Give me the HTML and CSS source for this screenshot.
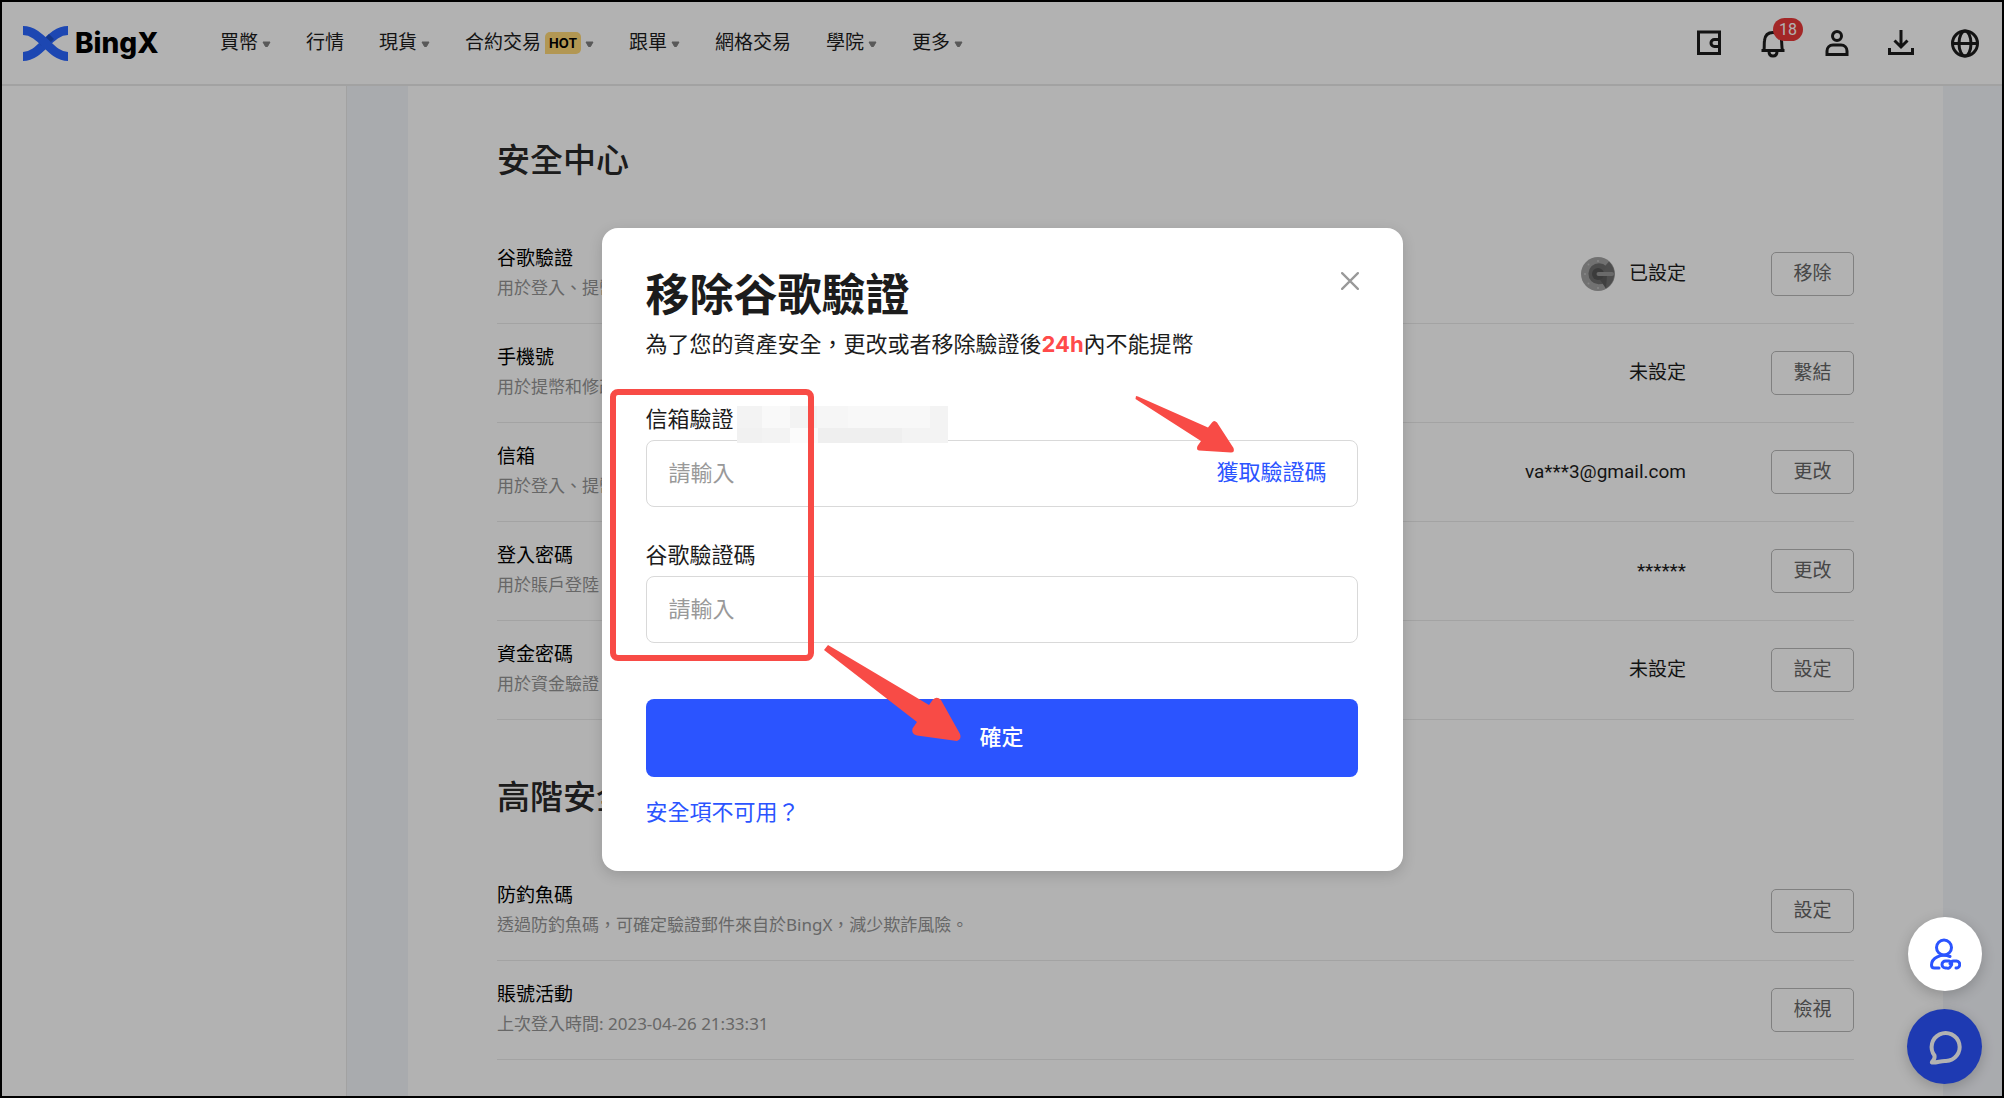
FILE: index.html
```html
<!DOCTYPE html>
<html lang="zh-Hant">
<head>
<meta charset="utf-8">
<meta name="viewport" content="width=device-width, initial-scale=1">
<title>BingX 安全中心</title>
<link rel="stylesheet" href="styles.css">
</head>
<body>
<div class="frame">
  <header class="header">
    <a class="logo" href="#" aria-label="BingX">
      <svg class="logo-mark" viewBox="0 0 45 35" aria-hidden="true">
        <path d="M0 30.500C18 30.500 26 4.500 45 4.500" fill="none" stroke="#2a66ff" stroke-width="9"/>
        <path d="M17 19L26 8L31 13L24 20Z" fill="#1f4fc4"/>
        <path d="M0 4.500C19 4.500 27 30.500 45 30.500" fill="none" stroke="#2a66ff" stroke-width="9"/>
      </svg>
      <span class="logo-text">BingX</span>
    </a>
    <nav class="nav">
      <a href="#">買幣<svg class="caret" viewBox="0 0 9 7"><path d="M1 1H8L5.500 5.500H3.500Z"/></svg></a>
      <a href="#">行情</a>
      <a href="#">現貨<svg class="caret" viewBox="0 0 9 7"><path d="M1 1H8L5.500 5.500H3.500Z"/></svg></a>
      <a href="#">合約交易<span class="hot">HOT</span><svg class="caret" viewBox="0 0 9 7"><path d="M1 1H8L5.500 5.500H3.500Z"/></svg></a>
      <a href="#">跟單<svg class="caret" viewBox="0 0 9 7"><path d="M1 1H8L5.500 5.500H3.500Z"/></svg></a>
      <a href="#">網格交易</a>
      <a href="#">學院<svg class="caret" viewBox="0 0 9 7"><path d="M1 1H8L5.500 5.500H3.500Z"/></svg></a>
      <a href="#">更多<svg class="caret" viewBox="0 0 9 7"><path d="M1 1H8L5.500 5.500H3.500Z"/></svg></a>
    </nav>
    <div class="tools">
      <button class="tool" type="button" aria-label="資產">
        <svg viewBox="0 0 32 32"><path d="M5.500 5H26.500V26.500H5.500ZM26.500 12.500H21.500A3.500 3.500 0 0 0 21.500 19.500H26.500"/></svg>
      </button>
      <button class="tool" type="button" aria-label="通知">
        <svg viewBox="0 0 32 32"><path d="M4.500 23.500H27.500M7 23C7.500 20 7 17 7.500 13.500C8 8.500 11 5.500 16 5.500S24 8.500 24.500 13.500C25 17 24.500 20 25.500 23M12 24.500C12 27.500 13.500 29 16 29S20 27.500 20 24.500"/></svg>
        <span class="count">18</span>
      </button>
      <button class="tool" type="button" aria-label="帳戶">
        <svg viewBox="0 0 32 32"><circle cx="16" cy="9" r="4.500"/><path d="M6 27.500V24C6 20.500 8.500 18 12 18H20C23.500 18 26 20.500 26 24V27.500Z"/></svg>
      </button>
      <button class="tool" type="button" aria-label="下載">
        <svg viewBox="0 0 32 32"><path d="M16 3V20M9.500 13.500L16 20L22.500 13.500M4.500 21V26.500H27.500V21"/></svg>
      </button>
      <button class="tool" type="button" aria-label="語言">
        <svg viewBox="0 0 32 32"><circle cx="16" cy="16.500" r="12.500"/><ellipse cx="16" cy="16.500" rx="6" ry="12.500"/><path d="M3.500 16.500H28.500"/></svg>
      </button>
    </div>
  </header>

  <div class="layout">
    <aside class="sidebar"></aside>
    <main class="main">
      <section class="section">
        <h2>安全中心</h2>
        <div class="row">
          <div class="info"><h3>谷歌驗證</h3><p>用於登入、提幣</p></div>
          <div class="value">
            <svg class="auth" viewBox="0 0 34 34" aria-hidden="true">
              <circle cx="17" cy="17" r="17" fill="#a3a3a3"/>
              <path d="M17 17L28 4.500A17 17 0 0 1 25 31.500Z" fill="#707070"/>
              <path d="M25.500 9.500A10.500 10.500 0 1 0 25 24.500L21 17Z" fill="#6e6e6e"/>
              <path d="M17 20L25 31.500L26 18Z" fill="#5c5c5c"/>
              <circle cx="17" cy="17" r="6" fill="#555"/>
              <path d="M17.500 17H31" stroke="#989898" stroke-width="4" stroke-linecap="round"/>
              <g fill="#c0c0c0"><circle cx="17" cy="4" r="1"/><circle cx="7.500" cy="7.500" r="1"/><circle cx="4" cy="17" r="1"/><circle cx="7.500" cy="26.500" r="1"/><circle cx="17" cy="31" r="1"/></g>
            </svg>
            已設定
          </div>
          <button class="action" type="button">移除</button>
        </div>
        <div class="row">
          <div class="info"><h3>手機號</h3><p>用於提幣和修改</p></div>
          <div class="value">未設定</div>
          <button class="action" type="button">繫結</button>
        </div>
        <div class="row">
          <div class="info"><h3>信箱</h3><p>用於登入、提幣</p></div>
          <div class="value">va***3@gmail.com</div>
          <button class="action" type="button">更改</button>
        </div>
        <div class="row">
          <div class="info"><h3>登入密碼</h3><p>用於賬戶登陸</p></div>
          <div class="value">******</div>
          <button class="action" type="button">更改</button>
        </div>
        <div class="row">
          <div class="info"><h3>資金密碼</h3><p>用於資金驗證</p></div>
          <div class="value">未設定</div>
          <button class="action" type="button">設定</button>
        </div>
      </section>
      <section class="section">
        <h2>高階安全</h2>
        <div class="row">
          <div class="info"><h3>防釣魚碼</h3><p>透過防釣魚碼，可確定驗證郵件來自於BingX，減少欺詐風險。</p></div>
          <button class="action" type="button">設定</button>
        </div>
        <div class="row">
          <div class="info"><h3>賬號活動</h3><p>上次登入時間: 2023-04-26 21:33:31</p></div>
          <button class="action" type="button">檢視</button>
        </div>
      </section>
    </main>
  </div>

  <button class="float chat" type="button" aria-label="線上客服">
    <svg viewBox="0 0 36 36"><path d="M7.500 26.500A14 14 0 1 1 19 32C14 31.500 10 34 5 33.500C4 33 8.500 31 7.500 26.500Z"/></svg>
  </button>
  <div class="backdrop"></div>
  <button class="float invite" type="button" aria-label="邀請好友">
    <svg viewBox="0 0 32 32"><circle cx="15" cy="9.500" r="7.500"/><path d="M21 18.500C12 15 2.500 20 2.500 27C2.500 29 3.500 30 5.500 30H10M17.500 30H16.500A3.500 3.500 0 0 1 16.500 23H20A3 3 0 0 1 22.500 27L21.500 28.500A3 3 0 0 1 17.500 30M27 30A3.500 3.500 0 0 0 27.500 23H24.500A4 4 0 0 0 21 25.500"/></svg>
  </button>

  <div class="stage">
    <div class="modal" role="dialog" aria-labelledby="modal-title">
      <button class="close" type="button" aria-label="關閉"><svg viewBox="0 0 16 16"><path d="M1 1L15 15M15 1L1 15"/></svg></button>
      <h1 id="modal-title">移除谷歌驗證</h1>
      <p class="notice">為了您的資產安全，更改或者移除驗證後<strong>24h</strong>內不能提幣</p>
      <form class="form">
        <div class="field">
          <label for="mail-code">信箱驗證</label>
          <div class="box">
            <input id="mail-code" type="text" placeholder="請輸入">
            <button class="get-code" type="button">獲取驗證碼</button>
          </div>
          <svg class="mosaic" viewBox="0 0 211 37" aria-hidden="true">
            <rect width="211" height="37" fill="#f3f3f3"/>
            <rect x="25" width="28" height="22" fill="#f9f9f9"/>
            <rect x="80" width="31" height="22" fill="#f6f6f6"/>
            <rect x="111" width="82" height="22" fill="#f8f8f8"/>
            <rect y="22" width="25" height="15" fill="#f1f1f1"/>
            <rect x="53" y="22" width="28" height="15" fill="#fbfbfb"/>
            <rect x="81" y="22" width="84" height="15" fill="#efefef"/>
          </svg>
        </div>
        <div class="field">
          <label for="google-code">谷歌驗證碼</label>
          <div class="box"><input id="google-code" type="text" placeholder="請輸入"></div>
        </div>
        <button class="submit" type="button">確定</button>
      </form>
      <a class="help" href="#">安全項不可用？</a>
      <svg class="marks" width="801" height="643" viewBox="0 0 801 643" aria-hidden="true">
        <rect x="11" y="164" width="198" height="266" rx="5" fill="none" stroke="#f84b46" stroke-width="6"/>
        <path d="M534 168L536 168.500L606 199.500L610 194.500Q612 191.500 615 194.500L631.500 220Q633 224.500 629 224.500L597 222.500Q594 222 595.500 218L599 213L533.500 171Z"/>
        <path d="M222 422L226 417L327 477L331 471.500Q335 468 339 472L358 506Q360 511 355 513L315 507.500Q309 506 310.500 500.500L315 494Z"/>
      </svg>
    </div>
  </div>
</div>
</body>
</html>
```
FILE: styles.css
```css
* {
  box-sizing: border-box;
}

body {
  margin: 0 1px 1px 0;
  background: #fff;
  font-family: Roboto, "Noto Sans CJK TC", sans-serif;
  color: #1c1c1c;
}

h1, h2, h3, p {
  margin: 0;
}

a {
  color: inherit;
  text-decoration: none;
}

button, input {
  font: inherit;
  color: inherit;
  margin: 0;
  padding: 0;
  border: 0;
  background: none;
}

button {
  cursor: pointer;
}

.frame {
  position: relative;
  display: flex;
  flex-direction: column;
  min-height: calc(100vh - 1px);
  border: 2px solid #000;
}

/* Header */
.header {
  display: flex;
  align-items: center;
  height: 84px;
  padding: 0 21px;
  border-bottom: 2px solid #e8e8e8;
}

.logo {
  display: flex;
  align-items: center;
  gap: 7px;
  width: 197px;
}

.logo-mark {
  width: 45px;
  height: 35px;
}

.logo-text {
  font: 800 28px/36px Inter, sans-serif;
  color: #000;
}

.nav {
  display: flex;
  gap: 35px;
  font-size: 19px;
  line-height: 28px;
  white-space: nowrap;
}

.nav a {
  display: flex;
  align-items: center;
  gap: 4px;
}

.caret {
  width: 9px;
  height: 7px;
  margin-top: 2px;
  fill: #808080;
  stroke: #808080;
  stroke-width: 1;
  stroke-linejoin: round;
}

.hot {
  padding: 0 4px;
  border-radius: 5px 5px 5px 0;
  background: #ffd977;
  font: 700 13px/22px Inter, sans-serif;
  color: #000;
}

.tools {
  display: flex;
  gap: 32px;
  margin-left: auto;
}

.tool {
  position: relative;
  width: 32px;
  height: 32px;
}

.tool svg {
  display: block;
  width: 32px;
  height: 32px;
  fill: none;
  stroke: #1c1c1c;
  stroke-width: 3;
}

.count {
  position: absolute;
  left: 16px;
  top: -9px;
  width: 30px;
  border-radius: 12px;
  background: #ea3838;
  color: #fff;
  font-size: 16px;
  line-height: 23px;
  text-align: center;
}

/* Page body */
.layout {
  flex: 1;
  display: grid;
  grid-template-columns: 345px minmax(0, 1fr);
  padding-right: 59px;
  background: #f3f5fa;
}

.sidebar {
  border-right: 1px solid #e8e8e8;
  background: #fff;
}

.main {
  margin-left: 61px;
  padding: 0 89px;
  background: #fff;
}

.section {
  padding-top: 50px;
}

.section + .section {
  padding-top: 53px;
}

h2 {
  padding-bottom: 39px;
  font-size: 33px;
  line-height: 50px;
  font-weight: 500;
  color: #292929;
}

.row {
  display: flex;
  align-items: center;
  height: 99px;
  border-bottom: 1px solid #eaeaea;
}

.info {
  flex: 1;
  padding-bottom: 3px;
}

h3 {
  font-size: 19px;
  line-height: 30px;
  font-weight: 400;
  color: #000;
}

.info p {
  font-family: "Noto Sans", "Noto Sans CJK TC", sans-serif;
  font-size: 17px;
  line-height: 28px;
  color: #949494;
}

.value {
  display: flex;
  align-items: center;
  gap: 14px;
  margin-right: 85px;
  font-size: 19px;
  line-height: 28px;
}

.auth {
  width: 34px;
  height: 34px;
}

.action {
  width: 83px;
  height: 44px;
  border: 1px solid #b8b8b8;
  border-radius: 5px;
  font-size: 19px;
  line-height: 28px;
  color: #666;
}

/* Floating buttons */
.float {
  position: absolute;
  right: 20px;
  display: flex;
  align-items: center;
  justify-content: center;
  border-radius: 50%;
  box-shadow: 0 4px 14px rgba(0, 0, 0, .2);
}

.float svg {
  fill: none;
  stroke-linecap: round;
  stroke-linejoin: round;
}

.chat {
  bottom: 12px;
  width: 75px;
  height: 75px;
  background: #2b54ff;
}

.chat svg {
  width: 36px;
  height: 36px;
  stroke: #fff;
  stroke-width: 4;
}

.invite {
  bottom: 105px;
  width: 74px;
  height: 74px;
  background: #fff;
}

.invite svg {
  width: 32px;
  height: 32px;
  stroke: #2b54ff;
  stroke-width: 3;
}

.backdrop {
  position: absolute;
  inset: 0;
  background: rgba(0, 0, 0, .3);
}

/* Dialog */
.stage {
  position: absolute;
  inset: 0;
  display: flex;
  align-items: center;
  justify-content: center;
  pointer-events: none;
}

.modal {
  position: relative;
  width: 801px;
  padding: 41px 45px 42px 44px;
  border-radius: 16px;
  background: #fff;
  box-shadow: 0 4px 14px rgba(0, 0, 0, .15);
  font-size: 22px;
  line-height: 32px;
  pointer-events: auto;
}

.close {
  position: absolute;
  top: 44px;
  right: 44px;
  width: 18px;
  height: 18px;
}

.close svg {
  display: block;
  width: 18px;
  height: 18px;
  fill: none;
  stroke: #999;
  stroke-width: 2;
  stroke-linecap: round;
}

h1 {
  font-size: 44px;
  line-height: 54px;
  font-weight: 700;
}

.notice {
  margin-top: 6px;
}

.notice strong {
  font-family: Inter, sans-serif;
  line-height: 1;
  color: #ff4a4a;
}

.form {
  display: flex;
  flex-direction: column;
  gap: 34px;
  margin-top: 44px;
}

.field {
  position: relative;
}

.field label {
  display: block;
  margin-bottom: 5px;
  line-height: 30px;
}

.box {
  display: flex;
  align-items: center;
  height: 67px;
  padding: 0 30px 0 22px;
  border: 1px solid #d9d9d9;
  border-radius: 8px;
}

.box input {
  flex: 1;
  min-width: 0;
  height: 34px;
  outline: 0;
}

.box input::placeholder {
  color: #999;
  opacity: 1;
}

.get-code, .help {
  color: #2b54ff;
}

.mosaic {
  position: absolute;
  left: 91px;
  top: 1px;
  width: 211px;
  height: 37px;
}

.submit {
  height: 78px;
  margin-top: 22px;
  border-radius: 8px;
  background: #2b54ff;
  color: #fff;
  font-weight: 500;
}

.help {
  display: block;
  width: max-content;
  margin-top: 20px;
}

.marks {
  position: absolute;
  left: 0;
  top: 0;
  fill: #f84b46;
  pointer-events: none;
}
```
